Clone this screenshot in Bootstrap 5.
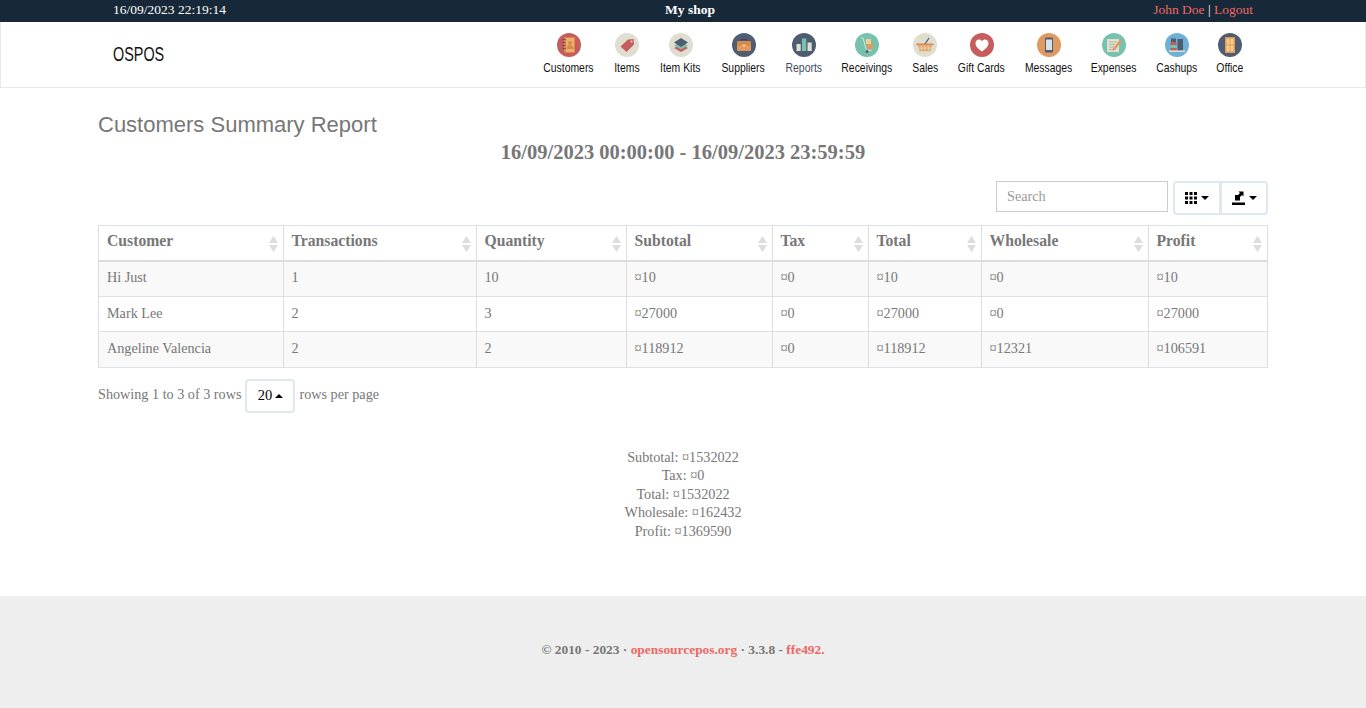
<!DOCTYPE html>
<html lang="en"><head><meta charset="utf-8"><title>Customers Summary Report</title>
<link rel="stylesheet" href="https://cdn.jsdelivr.net/npm/bootstrap@5.3.0/dist/css/bootstrap.min.css">
<style>
body{font-family:"Liberation Serif","DejaVu Serif",serif;font-size:14.2px;line-height:18.5px;color:#777;background:#fff}
a{color:#eb6864;text-decoration:none}
.shell{width:1170px;margin:0 auto}
.topstrip{background:#172838;color:#fff;height:22px;font-size:13.5px;line-height:20px}
.topstrip .shell{padding:0 15px}
.topcell{flex:1 1 0}
.topmid{padding-left:14px}
.mainnav{height:66px;background:#fff;border:1px solid #e9e9e9;border-top:0}
.brandmark{font-family:"Liberation Sans",sans-serif;font-size:20px;color:#111;margin-left:15px;line-height:24px;margin-top:20px;display:inline-block;transform:scaleX(.72);transform-origin:left center}
.menu{gap:20.5px;margin-right:26px;margin-top:11px}
.menuitem{display:flex;flex-direction:column;align-items:center;font-family:"Liberation Sans",sans-serif;font-size:13px;line-height:14px;color:#111;gap:4px;white-space:nowrap}
.menuitem.dim{color:#3f4e5e}
.menuitem svg{display:block;width:24px;height:24px;flex:none}
.squeeze{display:inline-block;transform:scaleX(.8);flex:none}
.menuitem:nth-child(1){width:50px}.menuitem:nth-child(2){width:25px}.menuitem:nth-child(3){width:42px}.menuitem:nth-child(4){width:43px}.menuitem:nth-child(5){width:36px}.menuitem:nth-child(6){width:50px}.menuitem:nth-child(7){width:25px}.menuitem:nth-child(8){width:47px}.menuitem:nth-child(9){width:46px}.menuitem:nth-child(10){width:44px}.menuitem:nth-child(11){width:40px}.menuitem:nth-child(12){width:25px}
.pagetitle{font-family:"Liberation Sans",Arial,sans-serif;font-size:22px;font-weight:400;line-height:26px;color:#777;margin:24px 0 0}
.subtitle{font-size:20.5px;font-weight:700;line-height:24px;text-align:center;color:#777;margin:2px 0 0}
.tools{margin-top:17px;height:44px;gap:5px}
.searchbox{width:172px;height:31px;border:1px solid #ccc;border-radius:0;padding:4px 10px;font-size:14.2px;color:#777;box-shadow:none}
.searchbox::placeholder{color:#999}
.toolbtn{width:48px;height:34px;background:#fff;border:2px solid #dfe8f1;border-radius:4px;padding:0;color:#000;display:inline-flex;align-items:center;justify-content:center;gap:4px}
.btn-group .toolbtn:first-child{border-radius:4px 0 0 4px}
.btn-group .toolbtn:last-child{border-radius:0 4px 4px 0;border-left:2px solid #dfe8f1;margin-left:-1px}
.caretdown{width:0;height:0;border:4px solid transparent;border-top-color:#000;border-bottom:0}
.caretup{width:0;height:0;border:4px solid transparent;border-bottom-color:#000;border-top:0}
.reporttable{table-layout:fixed;width:1169px;margin:0;color:#777;--bs-table-striped-bg:#f9f9f9;--bs-table-striped-color:#777;--bs-table-color:#777;font-size:14.2px}
.reporttable th{height:35px;padding:0 8px 3px;font-weight:700;font-size:15.7px;border-bottom:2px solid #ddd;position:relative;vertical-align:middle}
.reporttable td{padding:0 8px 2px;vertical-align:middle;height:35.5px}
.reporttable>:not(caption)>*>*{border-color:#ddd}
.reporttable>tbody{border-top:0}
.reporttable th:nth-child(1){width:184.500px}.reporttable th:nth-child(2){width:193px}.reporttable th:nth-child(3){width:150px}.reporttable th:nth-child(4){width:146px}.reporttable th:nth-child(5){width:96px}.reporttable th:nth-child(6){width:113px}.reporttable th:nth-child(7){width:167px}.reporttable th:nth-child(8){width:119.500px}
.sorter{position:absolute;right:5px;top:10px;width:9px;height:16px;display:block}
.pagerow{margin-top:11px;height:34px}
.pagerow>span:first-child{margin-right:4px;padding-bottom:2px}
.rowsword{margin-left:4px;padding-bottom:2px}
.pagebtn{width:50px;height:34px;background:#fff;border:2px solid #dfe8f1;border-radius:4px;padding:0;color:#000;font-size:14.500px;display:inline-flex;align-items:center;justify-content:center;gap:3px}
.totals{margin-top:35px;text-align:center}
.totals div{height:18.5px}
.pagefoot{margin-top:auto;height:112px;background:#eee;font-size:13.4px;font-weight:700;text-align:center;padding-top:45px;color:#777}
</style></head>
<body class="d-flex flex-column min-vh-100">
<div class="topstrip"><div class="shell d-flex">
<div class="topcell">16/09/2023 22:19:14</div>
<div class="topcell topmid text-center fw-bold">My shop</div>
<div class="topcell text-end"><a href="#">John Doe</a> | <a href="#">Logout</a></div>
</div></div>
<nav class="mainnav"><div class="shell d-flex justify-content-between">
<div class="brandmark">OSPOS</div>
<div class="menu d-flex">
<a class="menuitem" href="#"><svg viewBox="0 0 24 24"><circle cx="12" cy="12" r="12" fill="#c75c5c"/><rect x="7" y="4" width="11" height="16" rx="1" fill="#d8894a"/><rect x="9" y="5" width="8" height="14" fill="#eeb06d"/><circle cx="13" cy="10" r="2" fill="#d8894a"/><path d="M9.500 16c0-5.500 7-5.500 7 0z" fill="#d8894a"/><path d="M5.500 6.500h3M5.500 9.500h3M5.500 12.500h3M5.500 15.500h3" stroke="#3f4e5e" stroke-width=".8"/></svg><span class="squeeze">Customers</span></a>
<a class="menuitem" href="#"><svg viewBox="0 0 24 24"><circle cx="12" cy="12" r="12" fill="#e0ded0"/><path d="M5.500 13.500 13 6.500l5.500-.5.500 5.500-7.500 7.500z" fill="#c75c5c"/><circle cx="16.500" cy="8.500" r="1" fill="#e0ded0"/></svg><span class="squeeze">Items</span></a>
<a class="menuitem" href="#"><svg viewBox="0 0 24 24"><circle cx="12" cy="12" r="12" fill="#e0ded0"/><path d="M5 15 12 11.500 19 15l-7 4z" fill="#c75c5c"/><path d="M5 12.500 12 9l7 3.500-7 4z" fill="#76c2af"/><path d="M5 9.500 12 5l7 4.500L12 14z" fill="#4f5d73"/></svg><span class="squeeze">Item Kits</span></a>
<a class="menuitem" href="#"><svg viewBox="0 0 24 24"><circle cx="12" cy="12" r="12" fill="#4f5d73"/><path d="M9.500 8V6.500h5V8" fill="none" stroke="#394557" stroke-width="1"/><rect x="5" y="8" width="14" height="10" rx="1" fill="#e0995e"/><rect x="5" y="8" width="14" height="4.500" fill="#d38a4f"/><rect x="10.500" y="11.500" width="3" height="2" fill="#f5cf87"/></svg><span class="squeeze">Suppliers</span></a>
<a class="menuitem dim" href="#"><svg viewBox="0 0 24 24"><circle cx="12" cy="12" r="12" fill="#4f5d73"/><rect x="4.500" y="11" width="4.200" height="7" fill="#e0e0d1"/><rect x="10" y="5.500" width="4.200" height="12.500" fill="#76c2af"/><rect x="15.500" y="9.500" width="4.200" height="8.500" fill="#e0e0d1"/></svg><span class="squeeze">Reports</span></a>
<a class="menuitem" href="#"><svg viewBox="0 0 24 24"><circle cx="12" cy="12" r="12" fill="#76c2af"/><path d="M6 5h2l3.500 12.500h5" fill="none" stroke="#e0e0d1" stroke-width="1"/><rect x="11" y="6" width="5" height="5" fill="#f5cf87"/><rect x="12" y="11" width="6" height="5" fill="#e0995e"/><circle cx="12" cy="18.500" r="1.500" fill="#4f5d73"/></svg><span class="squeeze">Receivings</span></a>
<a class="menuitem" href="#"><svg viewBox="0 0 24 24"><circle cx="12" cy="12" r="12" fill="#e0ded0"/><path d="M12 11 16 5" stroke="#4f5d73" stroke-width="1.300"/><path d="M3.500 10.500h17v1.800h-17z" fill="#d88a4a"/><path d="M5 12.300h14l-1.500 6h-11z" fill="#e8a76a"/><path d="M8.500 13v4.500M12 13v4.500M15.500 13v4.500M5.500 15h13" stroke="#e0ded0" stroke-width=".7"/></svg><span class="squeeze">Sales</span></a>
<a class="menuitem" href="#"><svg viewBox="0 0 24 24"><circle cx="12" cy="12" r="12" fill="#c75c5c"/><path d="M12 18.500C7 15 5.500 12.500 5.500 10.200 5.500 8 7.200 6.500 9 6.500c1.300 0 2.400.6 3 1.800.6-1.200 1.700-1.800 3-1.800 1.800 0 3.500 1.500 3.500 3.700 0 2.300-1.500 4.800-6.500 8.300z" fill="#fff"/></svg><span class="squeeze">Gift Cards</span></a>
<a class="menuitem" href="#"><svg viewBox="0 0 24 24"><circle cx="12" cy="12" r="12" fill="#e0995e"/><rect x="8" y="4.500" width="8" height="15" rx="1.200" fill="#4f5d73"/><rect x="9" y="6.500" width="6" height="10.500" fill="#d5e2ea"/></svg><span class="squeeze">Messages</span></a>
<a class="menuitem" href="#"><svg viewBox="0 0 24 24"><circle cx="12" cy="12" r="12" fill="#76c2af"/><rect x="5" y="6" width="12" height="13" fill="#e0e0d1"/><path d="M7 9h8M7 11.500h6M7 14h5M7 16.500h6" stroke="#a9a99c" stroke-width=".8"/><path d="M11 15.500 18 6.500l2 1.500-7 9-2.500.8z" fill="#e0995e"/></svg><span class="squeeze">Expenses</span></a>
<a class="menuitem" href="#"><svg viewBox="0 0 24 24"><circle cx="12" cy="12" r="12" fill="#6fb0d6"/><rect x="6" y="5.500" width="5" height="3.500" fill="#4f5d73"/><rect x="5.500" y="9" width="6" height="3" fill="#c75c5c"/><rect x="5.500" y="12" width="6" height="3" fill="#76c2af"/><rect x="5.500" y="15" width="6" height="2.500" fill="#c75c5c"/><rect x="12.500" y="6" width="5.500" height="11.500" fill="#4f5d73"/><rect x="4" y="17.500" width="16" height="1.500" fill="#e0e0d1"/></svg><span class="squeeze">Cashups</span></a>
<a class="menuitem" href="#"><svg viewBox="0 0 24 24"><circle cx="12" cy="12" r="12" fill="#4f5d73"/><rect x="7" y="4" width="10" height="16" fill="#e0995e"/><rect x="8.500" y="5.500" width="3" height="6" fill="#f5cf87"/><rect x="12.500" y="5.500" width="3" height="6" fill="#f5cf87"/><rect x="8.500" y="12.500" width="3" height="6" fill="#f5cf87"/><rect x="12.500" y="12.500" width="3" height="6" fill="#f5cf87"/></svg><span class="squeeze">Office</span></a>
</div></div></nav>
<main class="shell">
<h3 class="pagetitle">Customers Summary Report</h3>
<h4 class="subtitle">16/09/2023 00:00:00 - 16/09/2023 23:59:59</h4>
<div class="tools d-flex justify-content-end align-items-start">
<input class="form-control searchbox" type="text" placeholder="Search">
<div class="btn-group">
<button class="btn toolbtn" type="button"><svg width="12" height="12" viewBox="0 0 12 12"><path d="M0 0h3v3H0zM4.500 0h3v3h-3zM9 0h3v3H9zM0 4.500h3v3H0zM4.500 4.500h3v3h-3zM9 4.500h3v3H9zM0 9h3v3H0zM4.500 9h3v3h-3zM9 9h3v3H9z" fill="#000"/></svg><span class="caretdown"></span></button>
<button class="btn toolbtn" type="button"><svg width="13" height="14" viewBox="0 0 13 14"><path d="M0 11.500h13V14H0zM3 9.500V4h3l2-2L6.500.5H11.500v5L10 4 8 6v3.500z" fill="#000"/></svg><span class="caretdown"></span></button>
</div></div>
<table class="table table-bordered table-striped reporttable">
<thead><tr>
<th>Customer<svg class="sorter" viewBox="0 0 9 16"><path d="M4.500 0 9 7H0zM4.500 16 0 9h9z" fill="#ddd"/></svg></th>
<th>Transactions<svg class="sorter" viewBox="0 0 9 16"><path d="M4.500 0 9 7H0zM4.500 16 0 9h9z" fill="#ddd"/></svg></th>
<th>Quantity<svg class="sorter" viewBox="0 0 9 16"><path d="M4.500 0 9 7H0zM4.500 16 0 9h9z" fill="#ddd"/></svg></th>
<th>Subtotal<svg class="sorter" viewBox="0 0 9 16"><path d="M4.500 0 9 7H0zM4.500 16 0 9h9z" fill="#ddd"/></svg></th>
<th>Tax<svg class="sorter" viewBox="0 0 9 16"><path d="M4.500 0 9 7H0zM4.500 16 0 9h9z" fill="#ddd"/></svg></th>
<th>Total<svg class="sorter" viewBox="0 0 9 16"><path d="M4.500 0 9 7H0zM4.500 16 0 9h9z" fill="#ddd"/></svg></th>
<th>Wholesale<svg class="sorter" viewBox="0 0 9 16"><path d="M4.500 0 9 7H0zM4.500 16 0 9h9z" fill="#ddd"/></svg></th>
<th>Profit<svg class="sorter" viewBox="0 0 9 16"><path d="M4.500 0 9 7H0zM4.500 16 0 9h9z" fill="#ddd"/></svg></th>
</tr></thead>
<tbody>
<tr><td>Hi Just</td><td>1</td><td>10</td><td>¤10</td><td>¤0</td><td>¤10</td><td>¤0</td><td>¤10</td></tr>
<tr><td>Mark Lee</td><td>2</td><td>3</td><td>¤27000</td><td>¤0</td><td>¤27000</td><td>¤0</td><td>¤27000</td></tr>
<tr><td>Angeline Valencia</td><td>2</td><td>2</td><td>¤118912</td><td>¤0</td><td>¤118912</td><td>¤12321</td><td>¤106591</td></tr>
</tbody></table>
<div class="pagerow d-flex align-items-center">
<span>Showing 1 to 3 of 3 rows</span>
<button class="btn pagebtn" type="button">20 <span class="caretup"></span></button>
<span class="rowsword">rows per page</span>
</div>
<div class="totals">
<div>Subtotal: ¤1532022</div><div>Tax: ¤0</div><div>Total: ¤1532022</div><div>Wholesale: ¤162432</div><div>Profit: ¤1369590</div>
</div>
</main>
<footer class="pagefoot">© 2010 - 2023 · <a href="#">opensourcepos.org</a> · 3.3.8 - <a href="#">ffe492.</a></footer>
</body></html>
